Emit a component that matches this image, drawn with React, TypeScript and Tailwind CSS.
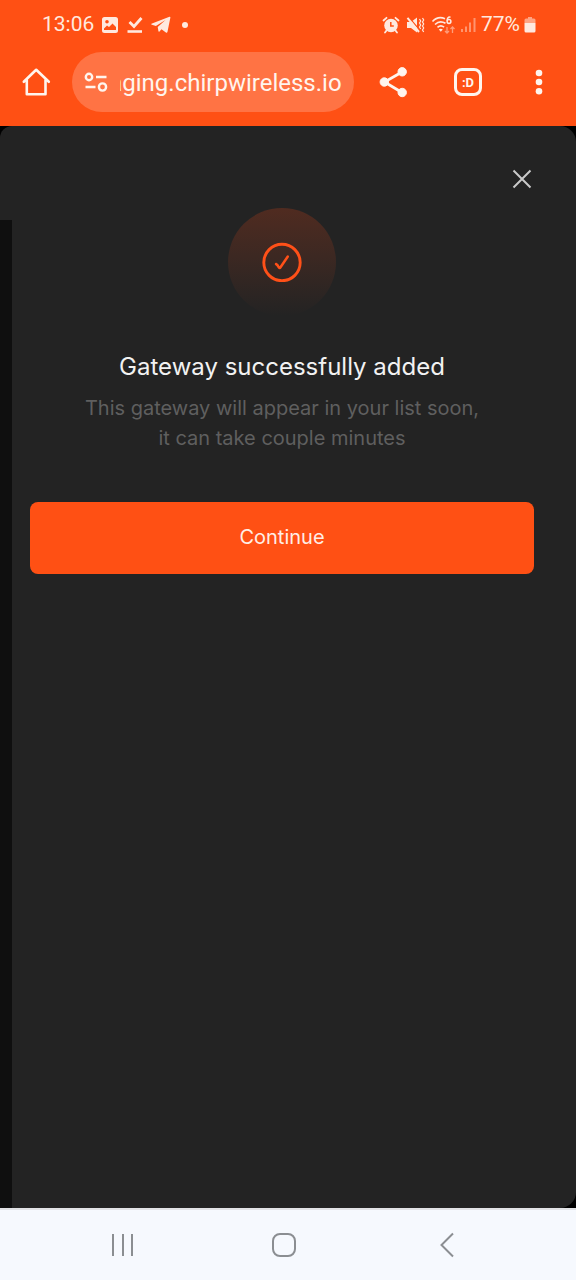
import { useLayoutEffect, useRef, useState } from "react";

function StatusBar() {
  return (
    <div className="flex h-[50px] items-center justify-between pr-10 pl-[42px] text-[21px] text-[#ffe9df]">
      <div className="flex items-center gap-[7px]">
        <span>13:06</span>
        <svg width="18" height="18" viewBox="0 0 18 18" aria-hidden="true">
          <path
            fill="currentColor"
            fillRule="evenodd"
            d="M3.500 1h11A2.500 2.500 0 0 1 17 3.500v11a2.500 2.500 0 0 1-2.500 2.500h-11A2.500 2.500 0 0 1 1 14.500v-11A2.500 2.500 0 0 1 3.500 1zM3 14h12v-3l-3.500-3.500L8 11l-2-1.500-3 3zM6 4a1.800 1.800 0 1 0 0 3.600A1.800 1.800 0 0 0 6 4z"
          />
        </svg>
        <svg width="18" height="18" viewBox="0 0 18 18" fill="none" stroke="currentColor" aria-hidden="true">
          <path d="M3.500 6 8 10.500 15.500 2" strokeWidth="2.800" />
          <path d="M1.500 15.500h14.500" strokeWidth="2.600" />
        </svg>
        <svg width="20" height="18" viewBox="0 0 20 18" aria-hidden="true">
          <path
            fill="currentColor"
            d="M18.500.8c.5-.2 1 .2.900.800L16.500 15.800c-.2.900-.9 1.100-1.600.700L10.500 13.300l-2 2.100c-.5.500-1 .3-1.100-.4L6.700 11 14.500 4 4.900 10 .9 8.800c-.9-.3-.9-.9.100-1.300z"
          />
        </svg>
        <span className="ml-1 size-1.5 rounded-full bg-current" />
      </div>
      <div className="flex items-center gap-1">
        <svg width="18" height="18" viewBox="0 0 18 18" aria-hidden="true">
          <circle cx="9" cy="9.500" r="6.800" fill="currentColor" />
          <path
            d="M1.500 4.500 4.500 1.800M16.500 4.500l-3-2.700M4.500 14.500 3 16.500M13.500 14.500l1.500 2"
            stroke="currentColor"
            strokeWidth="1.800"
            strokeLinecap="round"
          />
          <path d="M8.800 6v4h3" stroke="#ff5014" strokeWidth="1.500" fill="none" />
        </svg>
        <svg className="ml-0.5" width="19" height="18" viewBox="0 0 19 18" aria-hidden="true">
          <path fill="currentColor" d="M1 6h4L11 1.500v15L5 12H1z" />
          <path d="M2.800 1.200 14 14.500" stroke="#ff5014" strokeWidth="1.200" />
          <path d="M1.500 1.800 13 16" stroke="currentColor" strokeWidth="2" />
          <path
            d="M13.500 3l1.200 2-1.200 2 1.200 2-1.200 2 1.200 2M16.500 2l1.200 2-1.200 2 1.200 2-1.200 2 1.200 2-1.200 2 1.200 2"
            stroke="currentColor"
            strokeWidth="1.200"
            fill="none"
          />
        </svg>
        <svg className="ml-0.5" width="26" height="20" viewBox="0 0 26 20" fill="none" stroke="currentColor" aria-hidden="true">
          <path d="M1.500 6.500C5 2.700 10 2 14 3.700M4 9.500c3-3 7-3.300 10.500-1.200M6.500 12.300c2-1.800 4.600-1.800 6.600-.2" strokeWidth="1.600" />
          <path d="M7.800 14.500 9.800 16.800l2-2.300c-1.200-1-2.800-1-4 0z" fill="currentColor" stroke="none" />
          <path d="M19.500 2.200c-2.500-.5-3.500 1.300-3.300 3.500" strokeWidth="1.500" />
          <circle cx="18" cy="6.500" r="1.900" strokeWidth="1.500" />
          <path d="M16 12v6M14 16l2 2 2-2M21.500 18v-6M19.500 14l2-2 2 2" opacity=".5" strokeWidth="1.300" />
        </svg>
        <svg width="16" height="18" viewBox="0 0 16 18" fill="currentColor" opacity=".45" aria-hidden="true">
          <path d="M0 13h2v3H0zM4 10.500h2V16H4zM8 6.500h2V16H8zM12.500 2h2v14h-2z" />
        </svg>
        <span>77%</span>
        <svg width="12" height="18" viewBox="0 0 12 18" fill="currentColor" aria-hidden="true">
          <path opacity=".55" d="M4 1h4v1.500h2A1.500 1.500 0 0 1 11.500 4v3H.5V4A1.500 1.500 0 0 1 2 2.500h2z" />
          <path d="M.5 7h11v8a1.500 1.500 0 0 1-1.500 1.500H2A1.500 1.500 0 0 1 .5 15z" />
        </svg>
      </div>
    </div>
  );
}

function AddressBar() {
  const field = useRef<HTMLInputElement>(null);
  const [url, setUrl] = useState("staging.chirpwireless.io");

  // Keep the domain end in view when the address is longer than the field.
  useLayoutEffect(() => {
    if (field.current) field.current.scrollLeft = field.current.scrollWidth;
  }, []);

  return (
    <div className="flex h-15 min-w-0 flex-1 items-center gap-3 rounded-full bg-[#ff7344] px-3">
      <svg className="shrink-0" width="24" height="20" viewBox="0 0 24 20" fill="none" stroke="currentColor" strokeWidth="2.400" aria-hidden="true">
        <circle cx="5" cy="5" r="3.200" />
        <path d="M12 5h10.500M1.500 15h10" />
        <circle cx="18.500" cy="15" r="3.600" />
      </svg>
      <input
        ref={field}
        type="text"
        aria-label="Address"
        value={url}
        onChange={(e) => setUrl(e.target.value)}
        className="w-full min-w-0 bg-transparent pt-0.5 text-2xl outline-none"
      />
    </div>
  );
}

function Toolbar() {
  return (
    <div className="flex items-center pt-0.5 pr-[30px] pb-3.5 pl-5 text-[#fff5ee]">
      <button type="button" aria-label="Home" className="mr-5 shrink-0">
        <svg width="32" height="32" viewBox="0 0 32 32" fill="none" stroke="currentColor" strokeWidth="2.600" strokeLinejoin="round" strokeLinecap="round">
          <path d="M3.800 15.800 16.200 3.800l12.600 12M6.800 14v14.300h18.700V14" />
        </svg>
      </button>
      <AddressBar />
      <button type="button" aria-label="Share" className="ml-6 shrink-0">
        <svg width="32" height="32" viewBox="0 0 32 32" fill="currentColor" stroke="currentColor">
          <path d="M24 6 6.500 16 24 26.500" fill="none" strokeWidth="2.800" />
          <circle cx="24.200" cy="5.800" r="4.200" />
          <circle cx="6.300" cy="16" r="4.200" />
          <circle cx="24.200" cy="26.500" r="4.200" />
        </svg>
      </button>
      <button
        type="button"
        aria-label="Tabs"
        className="ml-11 flex size-7 shrink-0 items-center justify-center rounded-lg border-3 border-current font-[Roboto,sans-serif] text-[13px] leading-none font-bold"
      >
        :D
      </button>
      <button type="button" aria-label="Menu" className="ml-[50px] shrink-0">
        <svg width="14" height="32" viewBox="0 0 14 32" fill="currentColor">
          <circle cx="7" cy="7" r="3.300" />
          <circle cx="7" cy="16" r="3.300" />
          <circle cx="7" cy="25.200" r="3.300" />
        </svg>
      </button>
    </div>
  );
}

function Dialog() {
  return (
    <main className="flex flex-1 bg-black font-[Inter,sans-serif]">
      <div className="flex w-3 flex-col">
        <div className="h-[94px] rounded-tl-xl bg-[#232323]" />
        <div className="flex-1 bg-[#0f0f0f]" />
      </div>
      <section className="flex flex-1 flex-col items-center rounded-r-2xl bg-[#232323] pt-9 pr-[42px] pl-[18px]">
        <button type="button" aria-label="Close" className="self-end text-[#c9c9c9]">
          <svg width="24" height="34" viewBox="0 0 24 34" fill="none" stroke="currentColor" strokeWidth="2">
            <path d="m3.500 8.500 17 17M20.500 8.500l-17 17" />
          </svg>
        </button>
        <div className="mt-3 flex size-27 items-center justify-center rounded-full bg-linear-to-b from-[#502b20] to-[#232323]">
          <svg width="40" height="40" viewBox="0 0 40 40" fill="none" stroke="#ff5018" strokeLinecap="round" strokeLinejoin="round" aria-hidden="true">
            <circle cx="20" cy="20.500" r="18.200" strokeWidth="2.900" />
            <path d="M14 22c1.300.6 2.200 2 2.700 3.200.4.900 1.300.9 1.800.1L25.800 14.500" strokeWidth="2.500" />
          </svg>
        </div>
        <h1 className="mt-[35px] text-center text-2xl leading-8 text-[#f2f2f2]">Gateway successfully added</h1>
        <p className="mt-2.5 text-center text-xl leading-[30px] text-[#5f5f5f]">
          This gateway will appear in your list soon,
          <br />
          it can take couple minutes
        </p>
        <button type="button" className="mt-[49px] h-18 w-full rounded-lg bg-[#ff5014] pb-0.5 text-xl text-[#ffeee6]">
          Continue
        </button>
      </section>
    </main>
  );
}

function SystemNav() {
  return (
    <nav className="flex h-18 items-center justify-around border-t-2 border-[#e2e3e6] bg-[#f6f9fe] pr-12 pl-[41px] text-[#8b8e92]">
      <button type="button" aria-label="Recent apps">
        <svg width="26" height="26" viewBox="0 0 26 26" stroke="currentColor" strokeWidth="2">
          <path d="M4 2v22M14 2v22M23 2v22" />
        </svg>
      </button>
      <button type="button" aria-label="Home screen">
        <svg width="26" height="26" viewBox="0 0 26 26" fill="none" stroke="currentColor" strokeWidth="2">
          <rect x="2" y="2" width="22" height="22" rx="7" />
        </svg>
      </button>
      <button type="button" aria-label="Back">
        <svg width="26" height="26" viewBox="0 0 26 26" fill="none" stroke="currentColor" strokeWidth="2">
          <path d="M19 1.500 7.500 13 19 24.500" />
        </svg>
      </button>
    </nav>
  );
}

export default function App() {
  return (
    <div className="flex min-h-screen flex-col bg-black font-[Roboto,sans-serif]">
      <header className="bg-[#ff5014]">
        <StatusBar />
        <Toolbar />
      </header>
      <Dialog />
      <SystemNav />
    </div>
  );
}
